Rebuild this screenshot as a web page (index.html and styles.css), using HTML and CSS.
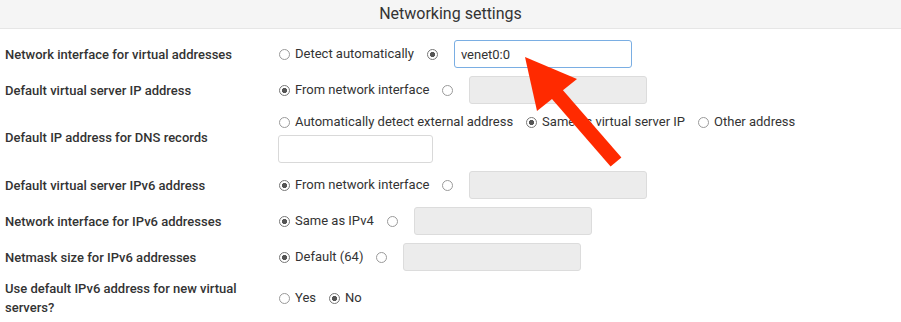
FILE: index.html
```html
<!doctype html>
<html lang="en">
<head>
<meta charset="utf-8">
<title>Networking settings</title>
<link rel="stylesheet" href="styles.css">
</head>
<body>
<div class="panel">
  <div class="panel-head">Networking settings</div>
  <table class="opts">
    <tr>
      <td class="lbl">Network interface for virtual addresses</td>
      <td><div class="line">
        <input type="radio" name="iface"><label>Detect automatically</label>
        <input type="radio" name="iface" checked><input class="txt focus" value="venet0:0">
      </div></td>
    </tr>
    <tr>
      <td class="lbl">Default virtual server IP address</td>
      <td><div class="line">
        <input type="radio" name="ip" checked><label>From network interface</label>
        <input type="radio" name="ip"><input class="txt" disabled>
      </div></td>
    </tr>
    <tr>
      <td class="lbl">Default IP address for DNS records</td>
      <td>
        <div class="line">
          <input type="radio" name="dns"><label>Automatically detect external address</label>
          <input type="radio" name="dns" checked><label>Same as virtual server IP</label>
          <input type="radio" name="dns"><label>Other address</label>
        </div>
        <input class="txt short under">
      </td>
    </tr>
    <tr>
      <td class="lbl">Default virtual server IPv6 address</td>
      <td><div class="line">
        <input type="radio" name="ip6" checked><label>From network interface</label>
        <input type="radio" name="ip6"><input class="txt" disabled>
      </div></td>
    </tr>
    <tr>
      <td class="lbl">Network interface for IPv6 addresses</td>
      <td><div class="line">
        <input type="radio" name="if6" checked><label>Same as IPv4</label>
        <input type="radio" name="if6"><input class="txt" disabled>
      </div></td>
    </tr>
    <tr>
      <td class="lbl">Netmask size for IPv6 addresses</td>
      <td><div class="line">
        <input type="radio" name="nm" checked><label>Default (64)</label>
        <input type="radio" name="nm"><input class="txt" disabled>
      </div></td>
    </tr>
    <tr>
      <td class="lbl">Use default IPv6 address for new virtual servers?</td>
      <td><div class="line">
        <input type="radio" name="def6"><label>Yes</label>
        <input type="radio" name="def6" checked><label>No</label>
      </div></td>
    </tr>
  </table>
</div>
<svg class="arrow" width="901" height="322" viewBox="0 0 901 322">
  <polygon points="525,57 577,79 537,111" fill="#ff2a00"/>
  <polygon points="544.6,90.5 555.4,81.5 621.4,157.5 610.6,166.5" fill="#ff2a00"/>
</svg>
</body>
</html>
```

FILE: styles.css
```css
*{box-sizing:border-box}
body{margin:0;background:#fff;color:#333;font-family:Roboto,"Liberation Sans",sans-serif;font-size:13px}
.panel-head{height:29px;background:#f5f5f5;border-bottom:1px solid #e6e6e6;text-align:center;font-size:16px;line-height:28px;color:#333}
.opts{border-collapse:collapse;margin-top:7px;width:100%}
.opts td{padding:4px 5px;vertical-align:middle}
.opts td.lbl{width:273px;font-weight:500;line-height:19px;color:#333}
.line{display:flex;align-items:center;min-height:20px}
.line label{margin-right:12px;line-height:18px}
input[type=radio]{appearance:none;-webkit-appearance:none;width:11px;height:11px;margin:0 5px 0 1px;border:1px solid #9a9a9a;border-radius:50%;background:#fff;flex:none}
input[type=radio]:checked{border-color:#777;background:radial-gradient(circle,#555 0,#555 2.3px,#fff 2.9px)}
.txt{height:28px;width:178px;margin-left:11px;border:1px solid #d9d9d9;border-radius:3px;background:#fff;font:inherit;color:#333;padding:0 6px}
.txt:disabled{background:#ececec;border-color:#dcdcdc}
.txt.focus{border-color:#7aaee3}
.txt.short{width:155px;margin-left:0}
.under{display:block;margin-top:3px}
.arrow{position:absolute;left:0;top:0;pointer-events:none}
```
